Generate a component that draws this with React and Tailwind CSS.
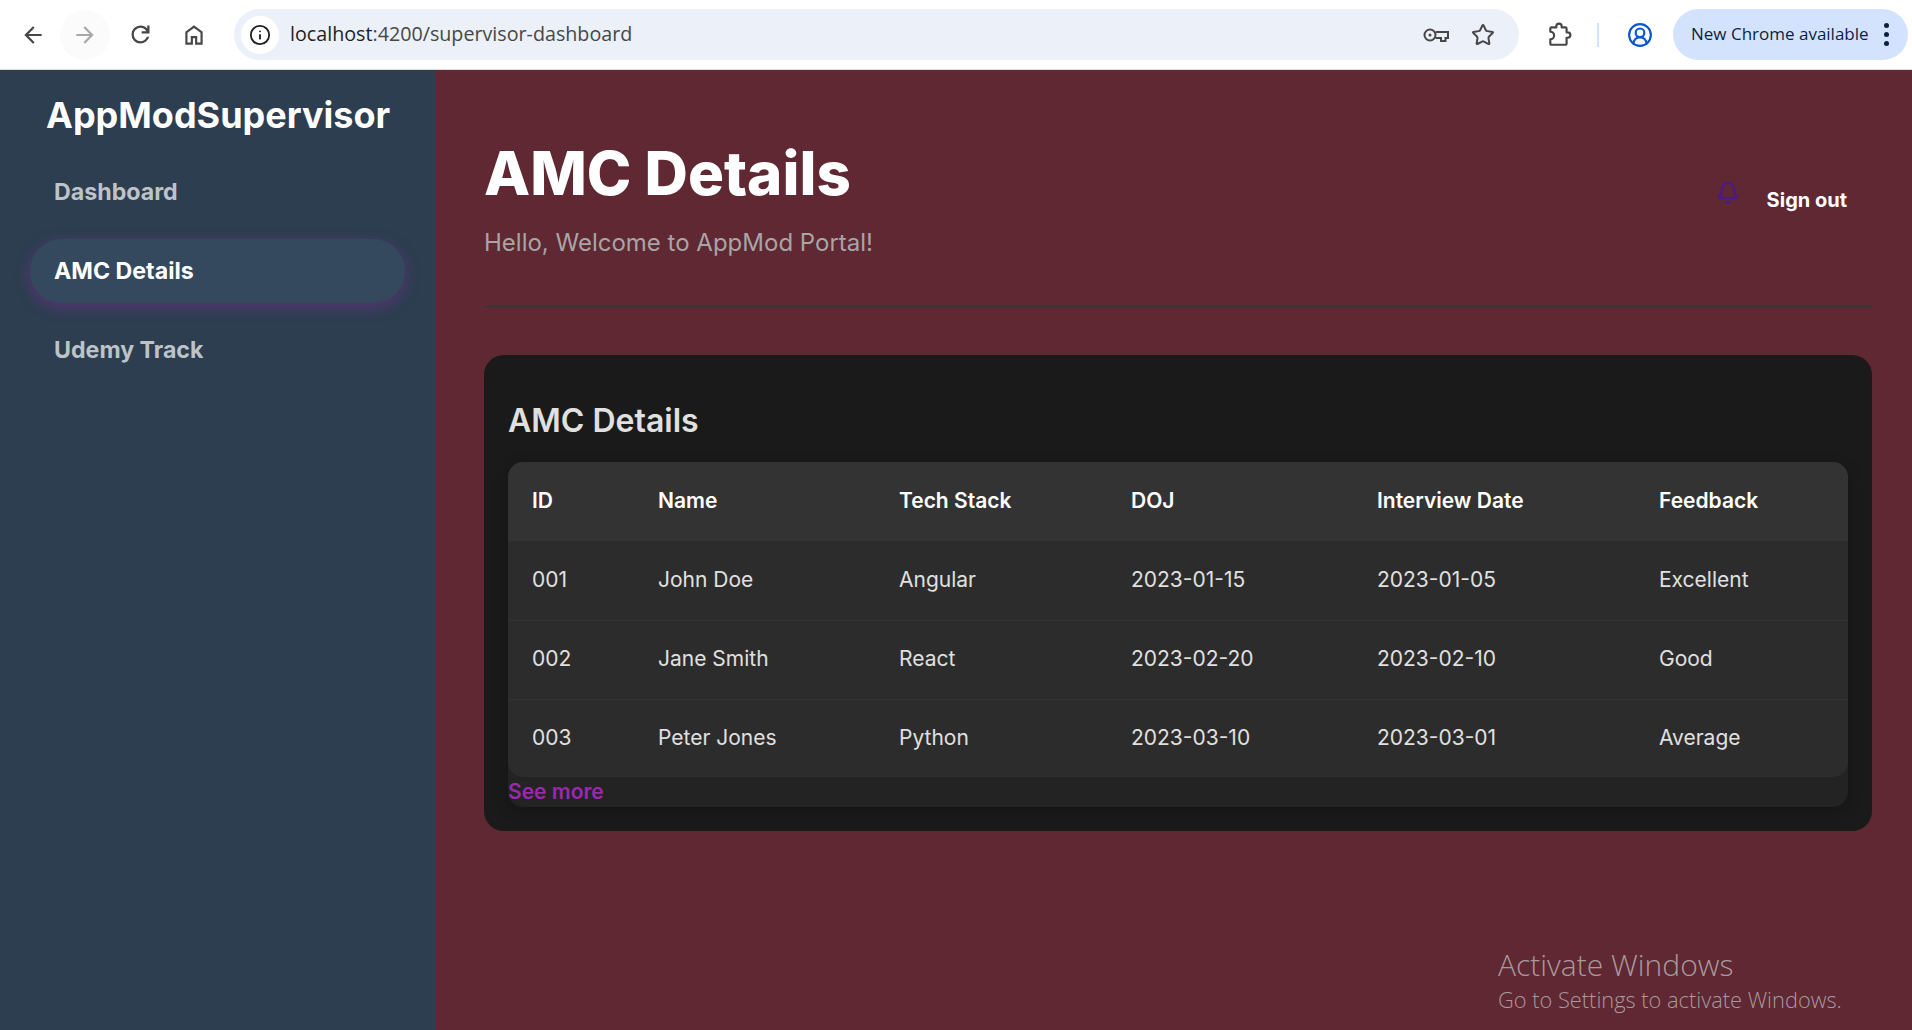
import React from 'react';
import { Info, Star, CircleUserRound, Bell } from 'lucide-react';

const rows = [
  ['001', 'John Doe', 'Angular', '2023-01-15', '2023-01-05', 'Excellent'],
  ['002', 'Jane Smith', 'React', '2023-02-20', '2023-02-10', 'Good'],
  ['003', 'Peter Jones', 'Python', '2023-03-10', '2023-03-01', 'Average'],
];

const columns = [
  ['ID', 'w-[126px]'],
  ['Name', 'w-[241px]'],
  ['Tech Stack', 'w-[232px]'],
  ['DOJ', 'w-[246px]'],
  ['Interview Date', 'w-[282px]'],
  ['Feedback', 'w-[213px]'],
];

// Chrome's own toolbar glyphs, lucide's differ too much
const Glyph = ({ d, size = 24 }) => (
  <svg width={size} height={size} viewBox="0 0 24 24" fill="currentColor"><path d={d} /></svg>
);

const KeyIcon = () => (
  <svg width="26" height="16" viewBox="0 0 26 16" fill="none" stroke="currentColor" strokeWidth="2">
    <circle cx="7" cy="8" r="5.5" />
    <circle cx="7" cy="8" r="1.5" fill="currentColor" stroke="none" />
    <path d="M12.5 5H25V11H22.5V14H18V11H12.5" />
  </svg>
);

const ExtensionIcon = () => (
  <svg width="26" height="26" viewBox="0 0 24 24" fill="none" stroke="currentColor" strokeWidth="2" strokeLinejoin="round">
    <path d="M5 5H9.5V4a2.5 2.5 0 0 1 5 0V5H18a1 1 0 0 1 1 1V9.5H20a2.5 2.5 0 0 1 0 5H19V20a1 1 0 0 1-1 1H5a1 1 0 0 1-1-1V16a3.5 3.5 0 0 0 0-7V6a1 1 0 0 1 1-1Z" />
  </svg>
);

const ChromeBar = () => (
  <div className="flex h-[70px] shrink-0 items-center border-b border-[#dcdcdc] bg-white font-['Open_Sans',sans-serif]">
    <div className="flex w-[234px] shrink-0 items-center text-[#474747]">
      <div className="flex w-[60px] justify-center pl-[6px]"><Glyph size={26} d="M7.825 13 13.425 18.6 12 20l-8-8 8-8 1.425 1.4-5.6 5.6H20v2z" /></div>
      <div className="flex h-[50px] w-[50px] items-center justify-center rounded-full bg-[#fbfbfb] text-[#a8a8a8]"><Glyph size={26} d="M16.175 13H4v-2h12.175l-5.6-5.6L12 4l8 8-8 8-1.425-1.4z" /></div>
      <div className="flex w-[56px] justify-center pl-[4px]"><Glyph size={27} d="M12 20q-3.35 0-5.675-2.325T4 12t2.325-5.675T12 4q1.725 0 3.3.712T18 6.75V4h2v7h-7V9h4.2q-.8-1.4-2.187-2.2T12 6Q9.5 6 7.75 7.75T6 12t1.75 4.25T12 18q1.925 0 3.475-1.1T17.65 14h2.1q-.7 2.65-2.85 4.325T12 20" /></div>
      <div className="flex w-[52px] justify-center pl-[4px]"><Glyph size={26} d="M6 19h3v-6h6v6h3v-9l-6-4.5L6 10zm-2 2V9l8-6 8 6v12h-7v-6h-2v6z" /></div>
    </div>
    <div className="flex h-[51px] w-[1285px] shrink-0 items-center rounded-full bg-[#ebf0f9] pl-[7px] pr-[24px]">
      <div className="flex h-[38px] w-[38px] shrink-0 items-center justify-center rounded-full bg-white text-[#1f1f1f]"><Info size={22} strokeWidth={2} /></div>
      <span className="mb-[1px] ml-[11px] text-[19.7px] text-[#1f1f1f]">localhost<span className="text-[#474747]">:4200/supervisor-dashboard</span></span>
      <div className="ml-auto flex items-center gap-[22px] text-[#474747]">
        <KeyIcon />
        <Star size={24} strokeWidth={2} />
      </div>
    </div>
    <div className="ml-[27px] flex items-center text-[#474747]">
      <ExtensionIcon />
      <div className="ml-[25px] h-[24px] w-[2px] bg-[#d3e3fd]" />
      <div className="ml-[28px] text-[#0b57d0]"><CircleUserRound size={26} strokeWidth={2} /></div>
    </div>
    <div className="ml-[20px] flex h-[51px] w-[235px] shrink-0 items-center rounded-full bg-[#d3e3fd] pl-[18px] text-[17px] text-[#0a1f44]">
      <span className="mb-[1px]">New Chrome available</span>
      <div className="ml-[15px] flex flex-col gap-[4px]">
        <div className="h-[5px] w-[5px] rounded-full bg-[#0a1f44]" />
        <div className="h-[5px] w-[5px] rounded-full bg-[#0a1f44]" />
        <div className="h-[5px] w-[5px] rounded-full bg-[#0a1f44]" />
      </div>
    </div>
  </div>
);

const Sidebar = () => (
  <aside className="flex w-[436px] shrink-0 flex-col bg-[#2c3e50] px-[30px] pt-[22px]">
    <h2 className="pl-[16px] text-[36px] font-bold leading-[46px] text-white">AppModSupervisor</h2>
    <nav className="mt-[22px] flex w-[375px] flex-col gap-[15px] text-[23.2px] font-bold">
      <a className="flex h-[64px] items-center rounded-[32px] pl-[24px] text-[#bdc3c7]">Dashboard</a>
      <a className="flex h-[64px] items-center rounded-[32px] bg-[#34495e] pl-[24px] text-white shadow-[0_4px_15px_rgba(156,39,176,0.4)]">AMC Details</a>
      <a className="flex h-[64px] items-center rounded-[32px] pl-[24px] text-[#bdc3c7]">Udemy Track</a>
    </nav>
  </aside>
);

const App = () => (
  <div className="relative flex h-[1030px] flex-col overflow-hidden font-['Inter',sans-serif]">
    <ChromeBar />
    <div className="flex flex-1">
      <Sidebar />
      <main className="flex-1 bg-[#5f2833] pl-[48px] pr-[40px]">
        <header className="flex h-[237px] items-start justify-between border-b border-[#3d3033] pt-[67px]">
          <div>
            <h1 className="text-[60px] font-extrabold leading-[72px] text-white">AMC Details</h1>
            <p className="mt-[17px] text-[24px] leading-[34px] text-[#a9a4a6]">Hello, Welcome to AppMod Portal!</p>
          </div>
          <div className="mt-[44px] flex items-center pr-[25px]">
            <Bell size={24} strokeWidth={2.4} className="mb-[14px] text-[#4b1a85]" />
            <span className="ml-[27px] text-[20px] font-bold leading-[28px] text-white">Sign out</span>
          </div>
        </header>
        <section className="mt-[48px] rounded-[20px] bg-[#1a1a1a] p-[24px] pt-[46px]">
          <h3 className="text-[32px] font-semibold leading-[40px] text-[#e0e0e0]">AMC Details</h3>
          <div className="mt-[21px] rounded-[15px] bg-[#232323] shadow-[0_4px_15px_rgba(0,0,0,0.2)]">
            <table className="w-[1340px] table-fixed overflow-hidden rounded-[15px] text-left text-[21px]">
              <thead className="bg-[#333333] text-white">
                <tr>
                  {columns.map(([label, width]) => (
                    <th key={label} className={`${width} h-[79px] px-[24px] pb-[2px] text-[21px] font-semibold`}>{label}</th>
                  ))}
                </tr>
              </thead>
              <tbody className="bg-[#2c2c2c] text-[#e0e0e0]">
                {rows.map((row, r) => (
                  <tr key={row[0]} className="border-b border-[#333333] last:border-b-0">
                    {row.map((cell, i) => (
                      <td key={i} className={r === 2 ? 'h-[78px] px-[24px] pb-[1px]' : 'h-[79px] px-[24px] pb-[1px]'}>{cell}</td>
                    ))}
                  </tr>
                ))}
              </tbody>
            </table>
            <a className="block h-[30px] text-[21px] font-semibold leading-[30px] text-[#9c27b0]">See more</a>
          </div>
        </section>
      </main>
    </div>
    {/* Windows watermark */}
    <div className="absolute left-[1498px] top-[945px] font-['Open_Sans',sans-serif] font-light text-[#a89a9e]">
      <div className="text-[30px] leading-[40px]">Activate Windows</div>
      <div className="text-[21.8px] leading-[30px]">Go to Settings to activate Windows.</div>
    </div>
  </div>
);

export default App;
